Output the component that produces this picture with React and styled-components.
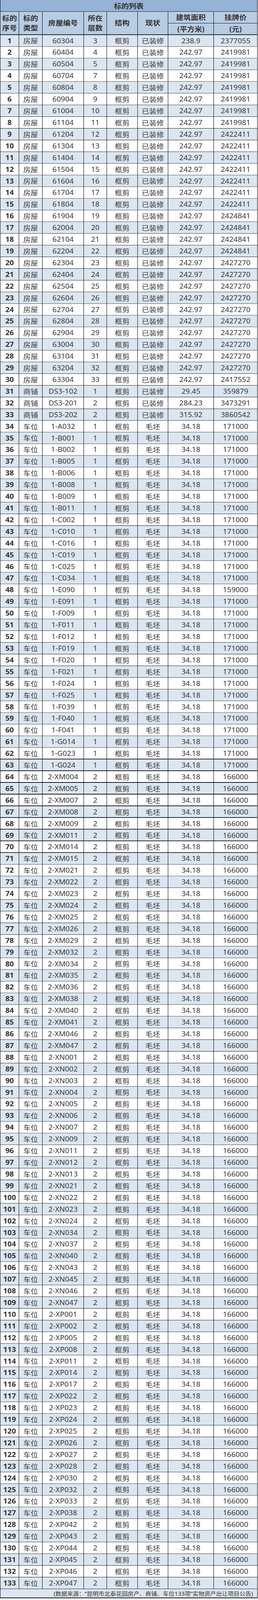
import React, { useLayoutEffect, useState } from "react";
import styled, { createGlobalStyle } from "styled-components";

const GlobalStyle = createGlobalStyle`
  body {
    margin: 0;
    background: #ffffff;
    font-family: "Noto Sans", "Noto Sans CJK SC", sans-serif;
    color: #333333;
  }
`;

const PAGE_HEIGHT = 4519;
const COLS = "48px 60px 106px 59px 79px 78px 117px 112px";

const Page = styled.div`
  width: 661px;
  overflow: hidden;
`;

const Table = styled.div`
  width: 660px;
  display: flex;
  flex-direction: column;
  border-left: 1px solid #000;
  box-sizing: border-box;
  transform-origin: top left;
`;

const Title = styled.div`
  height: 33px;
  box-sizing: border-box;
  background: #95b3d7;
  border-right: 1px solid #000;
  border-bottom: 1px solid #000;
  display: flex;
  align-items: center;
  justify-content: center;
  font-size: 19px;
  font-weight: 700;
  color: #333;
`;

const Head = styled.div`
  display: grid;
  grid-template-columns: ${COLS};
  grid-template-rows: 33px 33px;
  background: #b8cce4;
`;

const HeadCell = styled.div`
  grid-row: ${(p) => (p.$tall ? "span 2" : "auto")};
  box-sizing: border-box;
  border-right: 1px solid #000;
  border-bottom: ${(p) => (p.$tall || p.$bottom ? "2px" : "1px")} solid #000;
  display: flex;
  align-items: center;
  justify-content: center;
  text-align: center;
  font-size: 19px;
  font-weight: 700;
  line-height: 28px;
  color: #333;
`;

const Row = styled.div`
  display: grid;
  grid-template-columns: ${COLS};
  height: 33px;
  background: ${(p) => (p.$striped ? "#dce6f1" : "#ffffff")};
`;

const Cell = styled.div`
  box-sizing: border-box;
  height: 33px;
  border-right: 1px solid #000;
  border-bottom: ${(p) => (p.$thick ? "2px" : "1px")} solid #000;
  display: flex;
  align-items: center;
  justify-content: center;
  font-size: 19px;
  font-weight: ${(p) => (p.$bold ? 700 : 400)};
  color: ${(p) => (p.$bold ? "#333" : "#3a3a3a")};
  white-space: nowrap;
`;

const Footer = styled.div`
  height: 26px;
  box-sizing: border-box;
  background: #dce6f1;
  border-right: 1px solid #000;
  border-bottom: 2px solid #000;
  display: flex;
  align-items: center;
  justify-content: flex-end;
  padding-right: 11px;
  font-size: 15px;
  color: #333;
  white-space: nowrap;
`;

// 房屋
const houseFloors = [3, 4, 5];
for (let f = 7; f <= 33; f++) houseFloors.push(f);

const housePrice = (i) => {
  if (i === 1) return "2377055";
  if (i <= 8) return "2419981";
  if (i <= 15) return "2422411";
  if (i <= 19) return "2424841";
  if (i <= 29) return "2427270";
  return "2417552";
};

const rows = houseFloors.map((f, idx) => ({
  type: "房屋",
  code: `6${String(f).padStart(2, "0")}04`,
  floor: f,
  state: "已装修",
  area: idx === 0 ? "238.9" : "242.97",
  price: housePrice(idx + 1),
}));

// 商铺
[
  ["DS3-102", 1, "29.45", "359879"],
  ["DS3-201", 2, "284.23", "3473291"],
  ["DS3-202", 2, "315.92", "3860542"],
].forEach(([code, floor, area, price]) =>
  rows.push({ type: "商铺", code, floor, state: "已装修", area, price })
);

// 车位
const lot1 = [
  "A032", "B001", "B002", "B005", "B006", "B008", "B009", "B011",
  "C002", "C010", "C016", "C019", "C025", "C034", "E090", "E091",
  "F009", "F011", "F012", "F019", "F020", "F021", "F024", "F025",
  "F039", "F040", "F041", "G014", "G023", "G024",
];
lot1.forEach((c) =>
  rows.push({
    type: "车位",
    code: `1-${c}`,
    floor: 1,
    state: "毛坯",
    area: "34.18",
    price: c === "E090" ? "159000" : "171000",
  })
);

const lot2 = {
  XM: "004 005 007 008 009 011 014 015 021 022 023 024 025 026 029 032 034 035 036 038 040 041 046 047",
  XN: "001 002 003 004 005 006 007 009 011 012 013 021 022 023 024 034 037 040 043 045 046 047",
  XP: "001 002 005 008 011 014 017 022 023 024 025 026 027 028 030 032 033 038 042 043 044 045 046 047",
};
Object.entries(lot2).forEach(([zone, list]) =>
  list.split(" ").forEach((n) =>
    rows.push({
      type: "车位",
      code: `2-${zone}${n}`,
      floor: 2,
      state: "毛坯",
      area: "34.18",
      price: "166000",
    })
  )
);

const App = () => {
  // the long sheet is 4519px tall; if the window is shorter than that,
  // squeeze it vertically so the whole list still shows on one screen
  const [fit, setFit] = useState(1);
  useLayoutEffect(() => {
    const h = window.innerHeight;
    setFit(h > 0 && h < PAGE_HEIGHT ? h / PAGE_HEIGHT : 1);
  }, []);

  return (
    <>
      <GlobalStyle />
      <Page style={{ height: PAGE_HEIGHT * fit }}>
        <Table style={{ transform: `scaleY(${fit})` }}>
          <Title>标的列表</Title>
          <Head>
            <HeadCell $tall>
              标的
              <br />
              序号
            </HeadCell>
            <HeadCell $tall>
              标的
              <br />
              类型
            </HeadCell>
            <HeadCell $tall>房屋编号</HeadCell>
            <HeadCell $tall>
              所在
              <br />
              层数
            </HeadCell>
            <HeadCell $tall>结构</HeadCell>
            <HeadCell $tall>现状</HeadCell>
            <HeadCell>建筑面积</HeadCell>
            <HeadCell>挂牌价</HeadCell>
            <HeadCell $bottom>(平方米)</HeadCell>
            <HeadCell $bottom>(元)</HeadCell>
          </Head>
          {rows.map((r, i) => {
            const no = i + 1;
            const thick = no >= 62 && no <= 70;
            return (
              <Row key={no} $striped={no % 2 === 1}>
                <Cell $bold $thick={thick}>{no}</Cell>
                <Cell $thick={thick}>{r.type}</Cell>
                <Cell $thick={thick}>{r.code}</Cell>
                <Cell $thick={thick}>{r.floor}</Cell>
                <Cell $thick={thick}>框剪</Cell>
                <Cell $thick={thick}>{r.state}</Cell>
                <Cell $thick={thick}>{r.area}</Cell>
                <Cell $thick={thick}>{r.price}</Cell>
              </Row>
            );
          })}
          <Footer>(数据来源：“昆明市北泰花园房产、商铺、车位133项”实物资产出让项目公告)</Footer>
        </Table>
      </Page>
    </>
  );
};

export default App;
